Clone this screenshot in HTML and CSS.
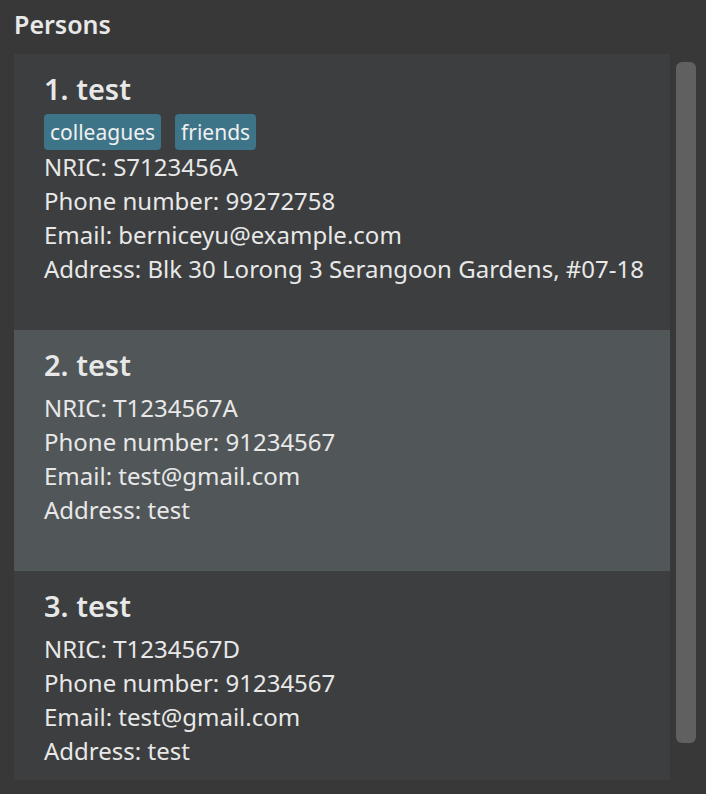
FILE: index.html
```html
<!DOCTYPE html>
<html lang="en">
<head>
<meta charset="utf-8">
<title>Persons</title>
<link rel="stylesheet" href="styles.css">
</head>
<body>
<main class="panel">
<h1 class="heading">Persons</h1>
<div class="viewport">
<ol class="persons">
<li class="person">
<h2 class="name">1. test</h2>
<div class="tags"><span class="tag">colleagues</span><span class="tag">friends</span></div>
<p class="field">NRIC: S7123456A</p>
<p class="field">Phone number: 99272758</p>
<p class="field">Email: berniceyu@example.com</p>
<p class="field">Address: Blk 30 Lorong 3 Serangoon Gardens, #07-18</p>
</li>
<li class="person">
<h2 class="name">2. test</h2>
<div class="tags"></div>
<p class="field">NRIC: T1234567A</p>
<p class="field">Phone number: 91234567</p>
<p class="field">Email: test@gmail.com</p>
<p class="field">Address: test</p>
</li>
<li class="person">
<h2 class="name">3. test</h2>
<div class="tags"></div>
<p class="field">NRIC: T1234567D</p>
<p class="field">Phone number: 91234567</p>
<p class="field">Email: test@gmail.com</p>
<p class="field">Address: test</p>
</li>
</ol>
<div class="scrollbar"><div class="thumb"></div></div>
</div>
</main>
</body>
</html>
```
FILE: styles.css
```css
* {
  box-sizing: border-box;
}

body {
  margin: 0;
  background: #383838;
  color: #e8e8e8;
  font-family: "Segoe UI", "Noto Sans", "Open Sans", sans-serif;
}

.panel {
  display: flex;
  flex-direction: column;
  height: 100vh;
  padding: 6px 10px 14px 14px;
}

.heading {
  margin: 0 0 12px;
  font-size: 25px;
  line-height: 36px;
  font-weight: 600;
}

.viewport {
  display: flex;
  flex: 1;
  gap: 6px;
  min-height: 0;
}

.persons {
  flex: 1;
  min-width: 0;
  margin: 0;
  padding: 0;
  list-style: none;
  overflow: hidden;
}

.person {
  padding: 15px 12px 44px 30px;
  background: #3c3e3f;
}

.person:nth-child(even) {
  background: #515658;
}

.name {
  margin: 0;
  font-size: 29px;
  line-height: 40px;
  font-weight: 600;
}

.tags {
  display: flex;
  gap: 14px;
  min-height: 6px;
  padding-top: 5px;
}

.tag {
  padding: 0 6px;
  border-radius: 4px;
  background: #3e7488;
  color: #f0f0f0;
  font-size: 21px;
  line-height: 36px;
}

.field {
  margin: 0;
  font-size: 24px;
  line-height: 34px;
  white-space: nowrap;
}

.scrollbar {
  width: 20px;
  padding: 8px 0 37px;
}

.thumb {
  height: 100%;
  border-radius: 6px;
  background: #606060;
}
```
